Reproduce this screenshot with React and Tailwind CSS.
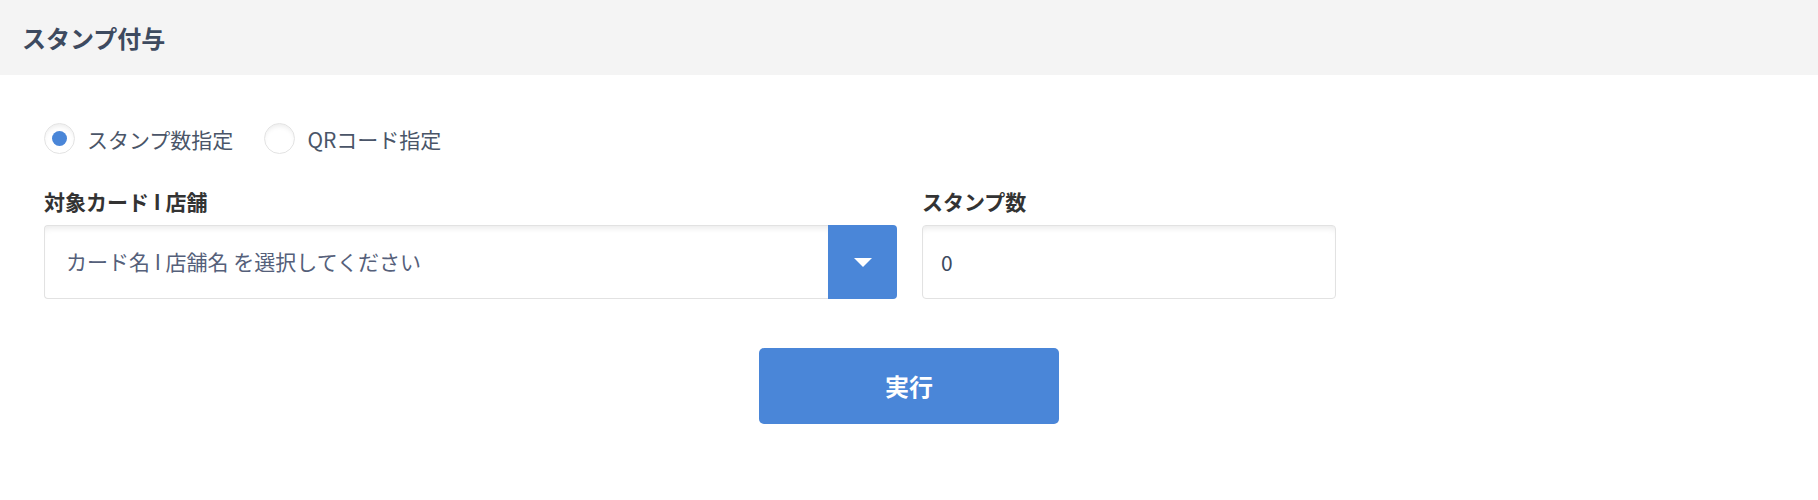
import React, { useState } from 'react';

const font = { fontFamily: '"Noto Sans CJK JP", "Noto Sans", sans-serif' };

const Radio = ({ checked, label, onClick }) => (
  <button type="button" onClick={onClick} className="flex items-center gap-[12px]">
    <span className="w-[31px] h-[31px] rounded-full border border-[#e3e3e3] bg-white shadow-[inset_0_4px_5px_-2px_rgba(0,0,0,0.08)] flex items-center justify-center">
      {checked && <span className="w-[15px] h-[15px] rounded-full bg-[#4a86d8]"></span>}
    </span>
    <span className="text-[21px] text-[#4a5568] leading-[28px]">{label}</span>
  </button>
);

const App = () => {
  const [mode, setMode] = useState('count');
  const [count, setCount] = useState('0');

  return (
    <div className="min-h-[500px] bg-white" style={font}>
      {/* Header */}
      <div className="h-[75px] bg-[#f4f4f4] flex items-center px-[22px]">
        <h1 className="text-[24px] font-bold text-[#3d4a5f] leading-none">スタンプ付与</h1>
      </div>

      <div className="px-[44px]">
        {/* Mode */}
        <div className="flex items-center gap-[31px] mt-[48px]">
          <Radio checked={mode === 'count'} label="スタンプ数指定" onClick={() => setMode('count')} />
          <Radio checked={mode === 'qr'} label="QRコード指定" onClick={() => setMode('qr')} />
        </div>

        {/* Fields */}
        <div className="flex gap-[25px] mt-[33px]">
          <div className="w-[853px]">
            <div className="text-[21px] font-bold text-[#333] leading-[28px] mb-[10px]">対象カード I 店舗</div>
            <div className="flex h-[74px]">
              <div className="flex-1 flex items-center pl-[21px] border border-r-0 border-[#e2e2e2] rounded-l-[4px] bg-white shadow-[inset_0_6px_6px_-4px_rgba(0,0,0,0.09)]">
                <span className="text-[21px] text-[#55607a]">カード名 I 店舗名 を選択してください</span>
              </div>
              <button type="button" className="w-[69px] bg-[#4a86d8] rounded-r-[4px] flex items-center justify-center">
                <svg width="18" height="9" viewBox="0 0 18 9">
                  <path d="M0 0h18L9 9z" fill="#fff" />
                </svg>
              </button>
            </div>
          </div>
          <div className="w-[414px]">
            <div className="text-[21px] font-bold text-[#333] leading-[28px] mb-[10px]">スタンプ数</div>
            <input
              value={count}
              onChange={(e) => setCount(e.target.value)}
              className="w-full h-[74px] px-[18px] text-[21px] text-[#3d4a5f] border border-[#e2e2e2] rounded-[4px] bg-white shadow-[inset_0_6px_6px_-4px_rgba(0,0,0,0.09)] outline-none"
              style={font}
            />
          </div>
        </div>

        {/* Submit */}
        <div className="flex justify-center mt-[49px]">
          <button type="button" className="w-[300px] h-[76px] rounded-[5px] bg-[#4a86d8] text-white text-[24px] font-bold">
            実行
          </button>
        </div>
      </div>
    </div>
  );
};

export default App;
